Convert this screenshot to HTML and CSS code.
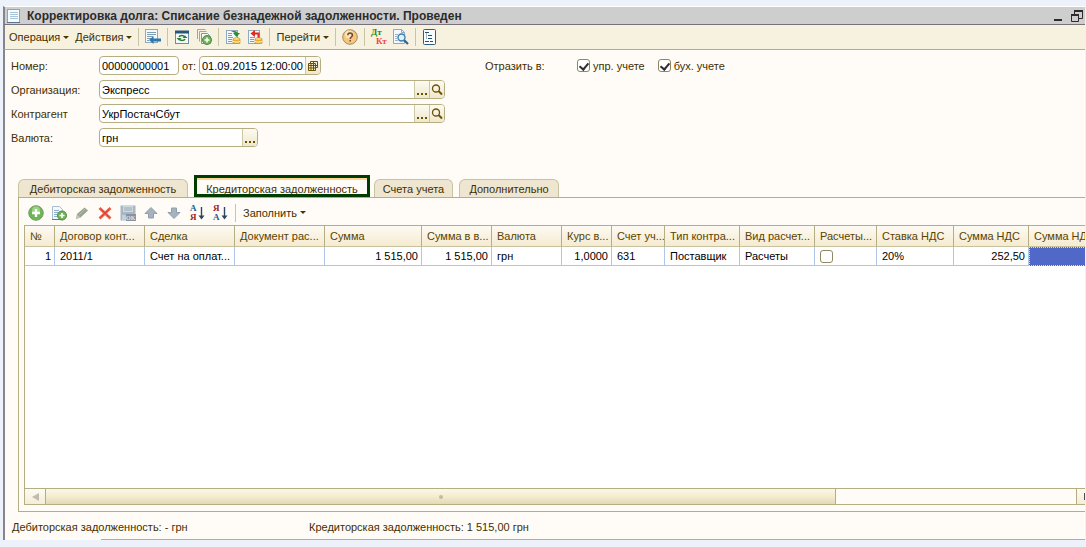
FILE: index.html
```html
<!DOCTYPE html>
<html lang="ru">
<head>
  <meta charset="UTF-8">
  <meta name="viewport" content="width=device-width, initial-scale=1.0">
  <title>Корректировка долга</title>
  <link rel="stylesheet" href="styles.css">
</head>
<body>
  <div class="window">

    <!-- Заголовок окна -->
    <header class="titlebar">
      <svg class="icon" viewBox="0 0 16 16"><rect x="1.5" y="1.5" width="12" height="13" fill="#f4fafd" stroke="#8aa4b8"/><path d="M4 4.5h8M4 6.5h8M4 8.5h8M4 10.5h8" stroke="#a9c6da"/><path d="M1 14.5h13" stroke="#56728c"/></svg>
      <h1>Корректировка долга: Списание безнадежной задолженности. Проведен</h1>
      <button type="button" aria-label="Свернуть"><svg class="icon" viewBox="0 0 16 16"><path d="M5 12h8" stroke="#2b2b2b" stroke-width="2"/></svg></button>
      <button type="button" aria-label="Восстановить"><svg class="icon" viewBox="0 0 16 16"><path d="M6 3h9M3 7h8" stroke="#2b2b2b" stroke-width="2"/><path d="M6.5 3v3M14.5 3v7.5H11M3.5 7v6.5h7V7" fill="none" stroke="#2b2b2b"/></svg></button>
    </header>

    <!-- Командная панель формы -->
    <div class="toolbar">
      <button type="button" class="menu">Операция<span class="arrow"></span></button>
      <button type="button" class="menu">Действия<span class="arrow"></span></button>
      <span class="sep"></span>
      <button type="button" aria-label="Записать и закрыть"><svg class="icon" viewBox="0 0 16 16"><rect x=".5" y=".5" width="12" height="13" fill="#f3f9fc" stroke="#8fa9bd"/><path d="M2 3.500h9M2 5.500h9M2 7.500h6M2 9.500h4M2 11.500h2" stroke="#7f9db5"/><path d="M4 11 8.500 7V9.500H16v3H8.500V15z" fill="#2f78ad"/></svg></button>
      <span class="sep"></span>
      <button type="button" aria-label="Обновить"><svg class="icon" viewBox="0 0 16 16"><rect x="1.5" y="2.5" width="13" height="12" fill="#f5f9fb" stroke="#6f8ca4"/><path d="M1 3h14" stroke="#24557d" stroke-width="3"/><path d="M5 8C6 6 9.500 6 11 8M11 10C10 12 6.500 12 5 10" fill="none" stroke="#2f7a2f" stroke-width="1.6"/><path d="M8.500 9h5L11 6.500zM2.500 9h5L5 11.500z" fill="#2f7a2f"/></svg></button>
      <button type="button" aria-label="Скопировать"><svg class="icon" viewBox="0 0 16 16"><path d="M1.5 10V.5h8M3.5 12.500v-10h7" fill="none" stroke="#8fa9bd"/><path d="M5.5 4.500h6l3 3v7h-9z" fill="#f3f9fc" stroke="#7b98ae"/><circle cx="11" cy="11" r="4.5" fill="#6cb653" stroke="#57854a"/><path d="M11 8.500v5M8.500 11h5" stroke="#fff" stroke-width="1.6"/></svg></button>
      <span class="sep"></span>
      <button type="button" aria-label="Провести"><svg class="icon" viewBox="0 0 16 16"><rect x="1.5" y="1.5" width="11" height="13" fill="#f3f9fc" stroke="#8fa9bd"/><path d="M3 4.500h4M3 6.500h4M3 8.500h5M3 10.500h4M3 12.500h4" stroke="#7f9db5"/><path d="M6 2h3.500c2 0 3 1 3 2H15l-3.500 4L8 4h2" fill="#2f8a3a"/><path d="M8 10v4.500h7V10" fill="#f0b93a" stroke="#c88c1c" stroke-width=".6"/><ellipse cx="11.5" cy="10" rx="3.5" ry="1.300" fill="#ffe08a" stroke="#c88c1c" stroke-width=".6"/><path d="M8 12.300c1 1 6 1 7 0" fill="none" stroke="#fff0b8"/></svg></button>
      <button type="button" aria-label="Отмена проведения"><svg class="icon" viewBox="0 0 16 16"><rect x="1.5" y="1.5" width="11" height="13" fill="#f3f9fc" stroke="#8fa9bd"/><path d="M3 8.500h5M3 10.500h4M3 12.500h4" stroke="#7f9db5"/><path d="M11.5 9V4.500H7" fill="none" stroke="#e02a1f" stroke-width="2"/><path d="M3.5 4.500 8 1v7z" fill="#e02a1f"/><path d="M8 10v4.500h7V10" fill="#f0b93a" stroke="#c88c1c" stroke-width=".6"/><ellipse cx="11.5" cy="10" rx="3.5" ry="1.300" fill="#ffe08a" stroke="#c88c1c" stroke-width=".6"/><path d="M8 12.300c1 1 6 1 7 0" fill="none" stroke="#fff0b8"/></svg></button>
      <span class="sep"></span>
      <button type="button" class="menu">Перейти<span class="arrow"></span></button>
      <span class="sep"></span>
      <button type="button" aria-label="Справка"><svg class="icon" viewBox="0 0 16 16"><circle cx="8" cy="8" r="7.3" fill="#f8c579" stroke="#a08b6e"/><circle cx="7" cy="5.500" r="4" fill="#fde3b5"/><path d="M5.8 6.200c0-3 4.600-3 4.600 0C10.400 8 8.200 8 8.200 10M8.200 11v1.600" fill="none" stroke="#6b4a35" stroke-width="1.5"/></svg></button>
      <span class="sep"></span>
      <button type="button" aria-label="Проводки"><svg class="icon" viewBox="0 0 16 16"><text class="glyph debit" x="0" y="6">Дт</text><text class="glyph credit" x="5" y="15">Кт</text></svg></button>
      <button type="button" aria-label="Просмотр"><svg class="icon" viewBox="0 0 16 16"><path d="M.5 .5h8l3 3v11H.5z" fill="#f3f9fc" stroke="#8fa9bd"/><path d="M8.500.5v3h3" fill="none" stroke="#8fa9bd"/><path d="M2 5.500h3M2 7.500h2M2 9.500h2M2 11.500h3" stroke="#9db7ca"/><circle cx="8.500" cy="8.500" r="3.5" fill="#dff0fa" stroke="#3f7fae" stroke-width="1.4"/><path d="m11.200 11.200 3.800 3.800" stroke="#2a659b" stroke-width="2.2"/></svg></button>
      <span class="sep"></span>
      <button type="button" aria-label="Структура подчиненности"><svg class="icon" viewBox="0 0 16 16"><rect x="1.500" y=".5" width="12" height="15" rx="1" fill="#f8fcfe" stroke="#2e5f80"/><path d="M3 3.500h4M6 6.500h4M6 9.500h4M3 12.500h4M8 12.500h3" stroke="#23516f"/><path d="M4.500 4v6" stroke="#9bb8ca"/></svg></button>
    </div>

    <!-- Реквизиты документа -->
    <form class="details">
      <div class="fields">
        <label for="number">Номер:</label>
        <div class="row">
          <span class="field number"><input id="number" type="text" value="00000000001"></span>
          <label for="date">от:</label>
          <span class="field date"><input id="date" type="text" value="01.09.2015 12:00:00"><button type="button" aria-label="Календарь"><svg class="pick" viewBox="0 0 12 12"><path d="M3.500 1.500h7v6h-7z" fill="#f6f0d6" stroke="#6b5200"/><path d="M1.500 3.500h7v7h-7z" fill="#f6f0d6" stroke="#6b5200"/><path d="M1 5.500h10M1 8h8M4 3v8M6.500 1v10" stroke="#6b5200"/></svg></button></span>
        </div>

        <label for="org">Организация:</label>
        <span class="field"><input id="org" type="text" value="Экспресс"><button type="button" aria-label="Выбрать"><span class="dots"></span></button><button type="button" aria-label="Открыть"><svg class="pick" viewBox="0 0 12 12"><circle cx="5" cy="4.500" r="3.5" fill="none" stroke="#6b5200" stroke-width="1.3"/><path d="m7.500 7 3.500 3.500" stroke="#6b5200" stroke-width="2"/></svg></button></span>

        <label for="partner">Контрагент</label>
        <span class="field"><input id="partner" type="text" value="УкрПостачСбут"><button type="button" aria-label="Выбрать"><span class="dots"></span></button><button type="button" aria-label="Открыть"><svg class="pick" viewBox="0 0 12 12"><circle cx="5" cy="4.500" r="3.5" fill="none" stroke="#6b5200" stroke-width="1.3"/><path d="m7.500 7 3.500 3.500" stroke="#6b5200" stroke-width="2"/></svg></button></span>

        <label for="currency">Валюта:</label>
        <span class="field currency"><input id="currency" type="text" value="грн"><button type="button" aria-label="Выбрать"><span class="dots"></span></button></span>
      </div>

      <div class="reflect">
        <span class="caption">Отразить в:</span>
        <label><input type="checkbox" checked>упр. учете</label>
        <label><input type="checkbox" checked>бух. учете</label>
      </div>
    </form>

    <!-- Закладки -->
    <nav class="tabs">
      <button type="button" class="tab tab-debit">Дебиторская задолженность</button>
      <button type="button" class="tab tab-credit active">Кредиторская задолженность</button>
      <button type="button" class="tab tab-accounts">Счета учета</button>
      <button type="button" class="tab tab-extra">Дополнительно</button>
    </nav>

    <section class="panel">
      <div class="toolbar small">
        <button type="button" aria-label="Добавить"><svg class="icon" viewBox="0 0 16 16"><circle cx="8" cy="8" r="7.3" fill="#6cb653" stroke="#7d9b72"/><circle cx="8" cy="5.500" r="4" fill="#9bd184"/><path d="M8 4v8M4 8h8" stroke="#fff" stroke-width="2.4"/></svg></button>
        <button type="button" aria-label="Добавить копированием"><svg class="icon" viewBox="0 0 16 16"><path d="M1.500 1.500h7l3 3v10h-10z" fill="#f3f9fc" stroke="#a9bccb"/><path d="M3 5.500h5M3 7.500h5M3 9.500h3M3 11.500h3" stroke="#8fb0c8"/><path d="M1 14.500h9" stroke="#4d7da3"/><circle cx="11" cy="10.500" r="4.5" fill="#6cb653" stroke="#57854a"/><path d="M11 8v5M8.500 10.500h5" stroke="#fff" stroke-width="1.6"/></svg></button>
        <button type="button" aria-label="Изменить"><svg class="icon" viewBox="0 0 16 16"><path d="m3 9 7.500-6.500 3.500 3L6.500 12.500 2 14z" fill="#98a58f"/><path d="m3 9.500 3.500 3L2 14z" fill="#c3c8b8"/><path d="m5 10 6-6" stroke="#b5c0ac"/></svg></button>
        <button type="button" aria-label="Удалить"><svg class="icon" viewBox="0 0 16 16"><path d="m2.500 3 11 10.500M13.500 3l-11 10.500" stroke="#f0604c" stroke-width="3"/><path d="m3.500 4 9 8.500M12.500 4l-9 8.500" stroke="#d8402e"/></svg></button>
        <button type="button" aria-label="Закончить редактирование"><svg class="icon" viewBox="0 0 16 16"><path d="M.5 .5h15v15H.5z" fill="#a9b6c2"/><path d="M3 1h10v6H3z" fill="#cfd8df"/><path d="M4 3h8M4 5h8" stroke="#9aa9b6"/><path d="M2 10h4v5H2z" fill="#c5cfd8"/><path d="M6 9h10v7H6z" fill="#8494a3"/><text class="glyph ok" x="6" y="15">OK</text></svg></button>
        <button type="button" aria-label="Переместить вверх"><svg class="icon" viewBox="0 0 16 16"><path d="M8 2.500 14 8.500h-3.500V13h-5V8.500H2z" fill="#a5b3be" stroke="#8e9fac" stroke-linejoin="round"/></svg></button>
        <button type="button" aria-label="Переместить вниз"><svg class="icon" viewBox="0 0 16 16"><path d="M8 13.500 2 7.500h3.500V3h5v4.500H14z" fill="#a5b3be" stroke="#8e9fac" stroke-linejoin="round"/></svg></button>
        <button type="button" aria-label="Сортировать по возрастанию"><svg class="icon" viewBox="0 0 16 16"><text class="glyph blue" x="1" y="6">А</text><text class="glyph red" x="1" y="15">Я</text><path d="M12.500 2v11" stroke="#2b4763" stroke-width="1.4"/><path d="M9.500 10.500h6l-3 4z" fill="#2b4763"/></svg></button>
        <button type="button" aria-label="Сортировать по убыванию"><svg class="icon" viewBox="0 0 16 16"><text class="glyph red" x="1" y="6">Я</text><text class="glyph blue" x="1" y="15">А</text><path d="M12.500 2v11" stroke="#2b4763" stroke-width="1.4"/><path d="M9.500 10.500h6l-3 4z" fill="#2b4763"/></svg></button>
        <span class="sep"></span>
        <button type="button" class="menu">Заполнить<span class="arrow"></span></button>
      </div>

      <div class="grid">
        <div class="grid-body">
          <table>
            <colgroup>
              <col class="w30"><col class="w90"><col class="w90"><col class="w90"><col class="w97">
              <col class="w70"><col class="w70"><col class="w50"><col class="w53"><col class="w75">
              <col class="w75"><col class="w62"><col class="w77"><col class="w75"><col class="w75">
            </colgroup>
            <thead>
              <tr>
                <th>№</th>
                <th>Договор конт...</th>
                <th>Сделка</th>
                <th>Документ рас...</th>
                <th>Сумма</th>
                <th>Сумма в в...</th>
                <th>Валюта</th>
                <th>Курс в...</th>
                <th>Счет уч...</th>
                <th>Тип контра...</th>
                <th>Вид расчет...</th>
                <th>Расчеты...</th>
                <th>Ставка НДС</th>
                <th>Сумма НДС</th>
                <th>Сумма НДС</th>
              </tr>
            </thead>
            <tbody>
              <tr>
                <td class="num">1</td>
                <td>2011/1</td>
                <td>Счет на оплат...</td>
                <td></td>
                <td class="num">1 515,00</td>
                <td class="num">1 515,00</td>
                <td>грн</td>
                <td class="num">1,0000</td>
                <td>631</td>
                <td>Поставщик</td>
                <td>Расчеты</td>
                <td><input type="checkbox" aria-label="Расчеты"></td>
                <td>20%</td>
                <td class="num">252,50</td>
                <td class="selected"></td>
              </tr>
            </tbody>
          </table>
        </div>
        <div class="scrollbar">
          <button type="button" class="scroll-left" aria-label="Влево"></button>
          <div class="thumb"></div>
          <div class="track"></div>
          <button type="button" class="scroll-right" aria-label="Вправо"></button>
        </div>
      </div>
    </section>

    <!-- Итоги -->
    <footer class="totals">
      <span>Дебиторская задолженность: - грн</span>
      <span>Кредиторская задолженность: 1 515,00 грн</span>
    </footer>
  </div>
</body>
</html>
```
FILE: styles.css
```css
* {
  box-sizing: border-box;
}

body {
  margin: 0;
  background: #edf1fa;
  color: #3f2f00;
  font: 11px/14px "Liberation Sans", Arial, sans-serif;
}

button,
input {
  font: inherit;
  color: inherit;
}

button {
  padding: 0;
  border: 0;
  background: none;
}

.icon {
  display: block;
  width: 16px;
  height: 16px;
  overflow: visible;
}

/* Окно */
.window {
  display: flex;
  flex-direction: column;
  height: 100vh;
  min-height: 400px;
  padding: 6px 1px 7px 3px;
  overflow: hidden;
}

.window > * {
  border-left: 2px solid #85858f;
}

.titlebar {
  display: flex;
  flex: none;
  align-items: center;
  gap: 3px;
  height: 19px;
  padding: 0 1px;
  background: #cecece;
  border-top: 1px solid #fff;
  border-bottom: 1px solid #77717c;
}

.titlebar h1 {
  flex: 1;
  margin: 0;
  padding-left: 2px;
  color: #2b2b2b;
  font-size: 12px;
  line-height: 16px;
  white-space: nowrap;
}

/* Командные панели */
.toolbar {
  display: flex;
  flex: none;
  align-items: center;
  gap: 6px;
  height: 25px;
  padding-left: 4px;
  background: #f7f1df;
  border-bottom: 1px solid #b5ae82;
}

.toolbar.small {
  gap: 7px;
  height: 28px;
  padding: 2px 0 0 9px;
  background: none;
  border: solid #b5ae82;
  border-width: 1px 0 0 1px;
}

.sep {
  width: 1px;
  height: 18px;
  background: #c9c4a6;
}

.menu {
  display: flex;
  align-items: center;
  gap: 3px;
  white-space: nowrap;
}

.arrow {
  border: 3px solid transparent;
  border-top-color: #4a3700;
  border-bottom: 0;
}

.glyph {
  font-family: "Liberation Serif", serif;
  font-weight: bold;
  font-size: 9px;
}

.debit {
  fill: #1f8a1f;
}

.credit {
  fill: #f04848;
}

.blue {
  fill: #20608c;
}

.red {
  fill: #a01c20;
}

.ok {
  fill: #dfe5ea;
  font-size: 6px;
}

/* Реквизиты */
.details {
  display: flex;
  flex: none;
  gap: 40px;
  padding: 6px 6px 28px;
  background: #fffcf7;
}

.fields {
  display: grid;
  grid-template-columns: 82px 346px;
  gap: 5px 6px;
  align-items: center;
}

.row {
  display: flex;
  align-items: center;
  gap: 3px;
}

.field {
  display: flex;
  height: 19px;
  overflow: hidden;
  background: #fff;
  border: 1px solid #b5ae82;
  border-radius: 4px;
}

.field input {
  flex: 1;
  min-width: 0;
  padding: 0 0 0 2px;
  color: #000;
  background: none;
  border: 0;
  outline: 0;
}

.field button {
  display: flex;
  flex: none;
  align-items: center;
  justify-content: center;
  width: 15px;
  background: linear-gradient(#fdfaf2, #efe8cc);
  border-left: 1px solid #cdc7a4;
}

.number {
  width: 80px;
}

.date {
  width: 122px;
}

.currency {
  width: 159px;
}

.pick {
  width: 12px;
  height: 12px;
}

.dots {
  width: 10px;
  height: 2px;
  margin-top: 8px;
  background: repeating-linear-gradient(90deg, #6b5200 0 2px, transparent 2px 4px);
}

.reflect {
  display: flex;
  align-items: center;
  gap: 13px;
  height: 19px;
}

.reflect .caption {
  width: 79px;
}

.reflect label {
  display: flex;
  align-items: center;
  gap: 3px;
}

input[type="checkbox"] {
  appearance: none;
  display: block;
  width: 13px;
  height: 13px;
  margin: 0;
  background: #fff;
  border: 1px solid #8f8763;
  border-radius: 3px;
}

input[type="checkbox"]:checked::after {
  content: "";
  display: block;
  width: 4px;
  height: 7px;
  margin: 1px 0 0 3px;
  border: solid #2f2f2f;
  border-width: 0 2px 2px 0;
  transform: rotate(40deg);
}

/* Закладки */
.tabs {
  display: flex;
  flex: none;
  gap: 6px;
  padding-left: 13px;
  background: #fffcf7;
}

.tab {
  height: 18px;
  margin-top: 4px;
  background: #efe6d1;
  border: 1px solid #c9c2a0;
  border-bottom: 0;
  border-radius: 6px 6px 0 0;
}

.tab-debit {
  width: 170px;
}

.tab-credit {
  width: 176px;
}

.tab-accounts {
  width: 79px;
}

.tab-extra {
  width: 100px;
}

/* Активная закладка обведена рамкой */
.tab.active {
  height: 22px;
  margin: 0 -2px 0 0;
  padding-top: 4px;
  background: #fffcf7;
  border: 3px solid #003c00;
  border-radius: 0;
  box-shadow: inset 0 2px #fcd590;
}

/* Табличная часть */
.panel {
  display: flex;
  flex: 1;
  flex-direction: column;
  min-height: 0;
  padding-left: 13px;
  background: #fffcf7;
}

.grid {
  display: flex;
  flex: 1;
  flex-direction: column;
  min-height: 0;
  padding: 0 0 6px 5px;
  border: solid #b5ae82;
  border-width: 0 0 1px 1px;
}

.grid-body {
  flex: 1;
  overflow: hidden;
  background: #fff;
  border: solid #b5ae82;
  border-width: 1px 0 0 1px;
}

table {
  width: 1079px;
  table-layout: fixed;
  border-collapse: separate;
  border-spacing: 0;
}

th,
td {
  padding: 0 3px 0 5px;
  overflow: hidden;
  text-align: left;
  white-space: nowrap;
}

th {
  height: 21px;
  color: #5a4300;
  font-weight: normal;
  background: linear-gradient(#fdfaf3, #f5ebd0);
  border-right: 1px solid #b5ae82;
  border-bottom: 1px solid #c9c2a0;
}

td {
  height: 19px;
  color: #000;
  border-right: 1px solid #aec6e8;
  border-bottom: 1px solid #aec6e8;
}

td.num {
  text-align: right;
}

td.selected {
  background: #5068c8;
  border: 1px dotted #d4dcf8;
}

.w30 { width: 30px; }
.w50 { width: 50px; }
.w53 { width: 53px; }
.w62 { width: 62px; }
.w70 { width: 70px; }
.w75 { width: 75px; }
.w77 { width: 77px; }
.w90 { width: 90px; }
.w97 { width: 97px; }

.scrollbar {
  display: flex;
  flex: none;
  height: 17px;
  border: solid #b5ae82;
  border-width: 1px 0 1px 1px;
}

.scrollbar > * {
  display: flex;
  align-items: center;
  justify-content: center;
  border-right: 1px solid #b5ae82;
}

.scroll-left {
  width: 21px;
  background: linear-gradient(#fdfaf3, #f3edd8);
}

.scroll-left::before {
  content: "";
  border: 4px solid transparent;
  border-right: 7px solid #c2bcaa;
  border-left: 0;
}

.thumb {
  flex: 791;
  background: linear-gradient(#fbf7e8, #f5ecd0 50%, #e3d9b4);
}

.thumb::before {
  content: "";
  width: 4px;
  height: 4px;
  background: #c4bd9c;
  border-radius: 2px;
}

.track {
  flex: 240;
}

.scrollbar .scroll-right {
  justify-content: flex-end;
  width: 8px;
  background: linear-gradient(#fdfaf3, #f3edd8);
  border-right: 0;
}

.scroll-right::before {
  content: "";
  width: 1px;
  height: 7px;
  background: #4a4a4a;
}

/* Итоги */
.totals {
  display: flex;
  flex: none;
  align-items: center;
  height: 28px;
  padding: 2px 0 0 7px;
  background: linear-gradient(#b5ae82, #b5ae82) 96px 100% / 100% 1px no-repeat #fffcf7;
}

.totals span {
  width: 297px;
}
```
